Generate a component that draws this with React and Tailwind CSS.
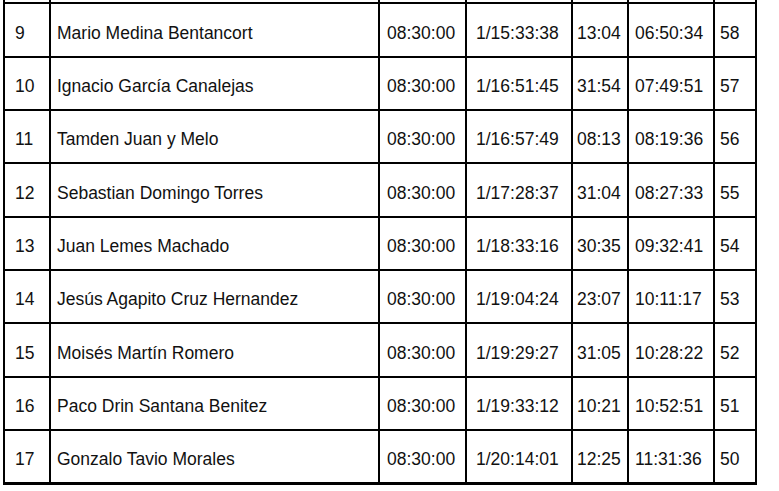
import React from 'react';

const rows = [
  ['9', 'Mario Medina Bentancort', '08:30:00', '1/15:33:38', '13:04', '06:50:34', '58'],
  ['10', 'Ignacio García Canalejas', '08:30:00', '1/16:51:45', '31:54', '07:49:51', '57'],
  ['11', 'Tamden Juan y Melo', '08:30:00', '1/16:57:49', '08:13', '08:19:36', '56'],
  ['12', 'Sebastian Domingo Torres', '08:30:00', '1/17:28:37', '31:04', '08:27:33', '55'],
  ['13', 'Juan Lemes Machado', '08:30:00', '1/18:33:16', '30:35', '09:32:41', '54'],
  ['14', 'Jesús Agapito Cruz Hernandez', '08:30:00', '1/19:04:24', '23:07', '10:11:17', '53'],
  ['15', 'Moisés Martín Romero', '08:30:00', '1/19:29:27', '31:05', '10:28:22', '52'],
  ['16', 'Paco Drin Santana Benitez', '08:30:00', '1/19:33:12', '10:21', '10:52:51', '51'],
  ['17', 'Gonzalo Tavio Morales', '08:30:00', '1/20:14:01', '12:25', '11:31:36', '50'],
];

// row heights (borders included) so lines land on the scan's rows
const heights = ['h-[54px]', 'h-[53px]', 'h-[53px]', 'h-[54px]', 'h-[53px]', 'h-[53px]', 'h-[54px]', 'h-[53px]', 'h-[56px]'];

const cols = [
  'w-[46px] pl-[10px]',
  'w-[329px] pl-[6px]',
  'w-[87px] pl-[7px]',
  'w-[106px] pl-[9px]',
  'w-[56px] pl-[4px]',
  'w-[86px] pl-[6px]',
  'w-[44px] pl-[5px] border-r-2',
];

const Row = ({ cells, h, last }) => (
  <div className={`flex border-t-2 border-black ${h} ${last ? 'border-b-[3px]' : ''}`}>
    {cells.map((c, i) => (
      <div key={i} className={`${cols[i]} shrink-0 flex items-center pt-[6px] border-l-2 border-black whitespace-nowrap`}>
        {c}
      </div>
    ))}
  </div>
);

export default function App() {
  return (
    <div
      className="w-[779px] h-[491px] bg-white text-[#111] text-[17.5px] overflow-hidden pl-[3px]"
      style={{ fontFamily: '"Liberation Sans", Arial, sans-serif' }}
    >
      <div className="w-[754px]">
        {/* tail of the row above */}
        <div className="flex h-[2px]">
          {cols.map((c, i) => (
            <div key={i} className={`${c} shrink-0 border-l-2 border-black`} />
          ))}
        </div>
        {rows.map((r, i) => (
          <Row key={r[0]} cells={r} h={heights[i]} last={i === rows.length - 1} />
        ))}
      </div>
    </div>
  );
}
